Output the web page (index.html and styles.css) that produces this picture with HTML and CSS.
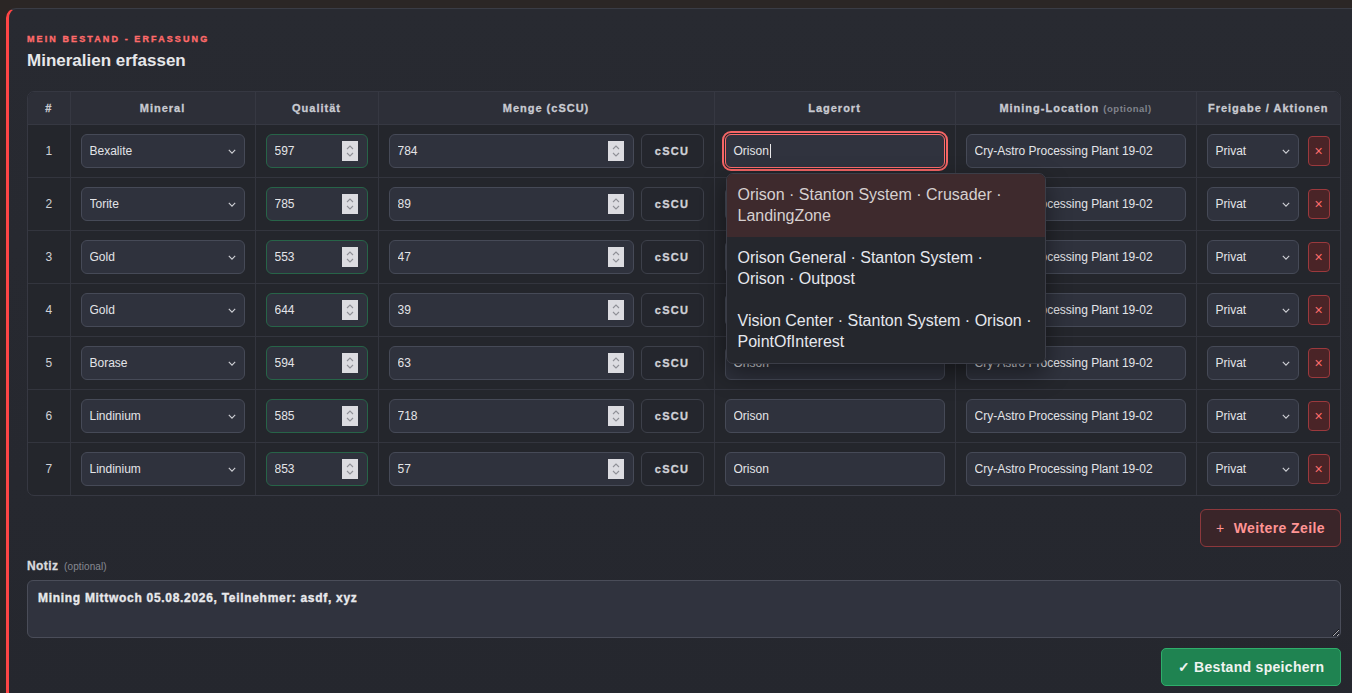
FILE: index.html
```html
<!DOCTYPE html>
<html lang="de">
<head>
<meta charset="utf-8">
<title>Mineralien erfassen</title>
<link rel="stylesheet" href="styles.css">
</head>
<body>
<div class="page">
  <section class="card">
    <div class="eyebrow">MEIN BESTAND - ERFASSUNG</div>
    <h2 class="title">Mineralien erfassen</h2>

    <div class="table-wrap">
      <table class="grid">
        <colgroup>
          <col class="c-num"><col class="c-min"><col class="c-q"><col class="c-amt"><col class="c-loc"><col class="c-mine"><col class="c-act">
        </colgroup>
        <thead>
          <tr>
            <th>#</th>
            <th>Mineral</th>
            <th>Qualität</th>
            <th>Menge (cSCU)</th>
            <th>Lagerort</th>
            <th>Mining-Location <span class="opt">(optional)</span></th>
            <th>Freigabe / Aktionen</th>
          </tr>
        </thead>
        <tbody>
          <tr>
            <td class="n">1</td>
            <td><div class="select"><select><option>Bexalite</option></select><svg class="chev" viewBox="0 0 10 6"><path d="M1 1l4 4 4-4"/></svg></div></td>
            <td><div class="num q"><input value="597"><span class="spin"><svg viewBox="0 0 10 16"><path d="M2 6l3-3 3 3M2 10l3 3 3-3"/></svg></span></div></td>
            <td><div class="amount"><div class="num"><input value="784"><span class="spin"><svg viewBox="0 0 10 16"><path d="M2 6l3-3 3 3M2 10l3 3 3-3"/></svg></span></div><button class="unit">cSCU</button></div></td>
            <td class="loc">
              <div class="text focus"><span>Orison</span><span class="caret"></span></div>
              <ul class="suggest">
                <li class="active">Orison · Stanton System · Crusader · LandingZone</li>
                <li>Orison General · Stanton System · Orison · Outpost</li>
                <li>Vision Center · Stanton System · Orison · PointOfInterest</li>
              </ul>
            </td>
            <td><input class="text" value="Cry-Astro Processing Plant 19-02"></td>
            <td><div class="acts"><div class="select vis"><select><option>Privat</option></select><svg class="chev" viewBox="0 0 10 6"><path d="M1 1l4 4 4-4"/></svg></div><button class="del">×</button></div></td>
          </tr>
          <tr>
            <td class="n">2</td>
            <td><div class="select"><select><option>Torite</option></select><svg class="chev" viewBox="0 0 10 6"><path d="M1 1l4 4 4-4"/></svg></div></td>
            <td><div class="num q"><input value="785"><span class="spin"><svg viewBox="0 0 10 16"><path d="M2 6l3-3 3 3M2 10l3 3 3-3"/></svg></span></div></td>
            <td><div class="amount"><div class="num"><input value="89"><span class="spin"><svg viewBox="0 0 10 16"><path d="M2 6l3-3 3 3M2 10l3 3 3-3"/></svg></span></div><button class="unit">cSCU</button></div></td>
            <td><input class="text" value="Orison"></td>
            <td><input class="text" value="Cry-Astro Processing Plant 19-02"></td>
            <td><div class="acts"><div class="select vis"><select><option>Privat</option></select><svg class="chev" viewBox="0 0 10 6"><path d="M1 1l4 4 4-4"/></svg></div><button class="del">×</button></div></td>
          </tr>
          <tr>
            <td class="n">3</td>
            <td><div class="select"><select><option>Gold</option></select><svg class="chev" viewBox="0 0 10 6"><path d="M1 1l4 4 4-4"/></svg></div></td>
            <td><div class="num q"><input value="553"><span class="spin"><svg viewBox="0 0 10 16"><path d="M2 6l3-3 3 3M2 10l3 3 3-3"/></svg></span></div></td>
            <td><div class="amount"><div class="num"><input value="47"><span class="spin"><svg viewBox="0 0 10 16"><path d="M2 6l3-3 3 3M2 10l3 3 3-3"/></svg></span></div><button class="unit">cSCU</button></div></td>
            <td><input class="text" value="Orison"></td>
            <td><input class="text" value="Cry-Astro Processing Plant 19-02"></td>
            <td><div class="acts"><div class="select vis"><select><option>Privat</option></select><svg class="chev" viewBox="0 0 10 6"><path d="M1 1l4 4 4-4"/></svg></div><button class="del">×</button></div></td>
          </tr>
          <tr>
            <td class="n">4</td>
            <td><div class="select"><select><option>Gold</option></select><svg class="chev" viewBox="0 0 10 6"><path d="M1 1l4 4 4-4"/></svg></div></td>
            <td><div class="num q"><input value="644"><span class="spin"><svg viewBox="0 0 10 16"><path d="M2 6l3-3 3 3M2 10l3 3 3-3"/></svg></span></div></td>
            <td><div class="amount"><div class="num"><input value="39"><span class="spin"><svg viewBox="0 0 10 16"><path d="M2 6l3-3 3 3M2 10l3 3 3-3"/></svg></span></div><button class="unit">cSCU</button></div></td>
            <td><input class="text" value="Orison"></td>
            <td><input class="text" value="Cry-Astro Processing Plant 19-02"></td>
            <td><div class="acts"><div class="select vis"><select><option>Privat</option></select><svg class="chev" viewBox="0 0 10 6"><path d="M1 1l4 4 4-4"/></svg></div><button class="del">×</button></div></td>
          </tr>
          <tr>
            <td class="n">5</td>
            <td><div class="select"><select><option>Borase</option></select><svg class="chev" viewBox="0 0 10 6"><path d="M1 1l4 4 4-4"/></svg></div></td>
            <td><div class="num q"><input value="594"><span class="spin"><svg viewBox="0 0 10 16"><path d="M2 6l3-3 3 3M2 10l3 3 3-3"/></svg></span></div></td>
            <td><div class="amount"><div class="num"><input value="63"><span class="spin"><svg viewBox="0 0 10 16"><path d="M2 6l3-3 3 3M2 10l3 3 3-3"/></svg></span></div><button class="unit">cSCU</button></div></td>
            <td><input class="text" value="Orison"></td>
            <td><input class="text" value="Cry-Astro Processing Plant 19-02"></td>
            <td><div class="acts"><div class="select vis"><select><option>Privat</option></select><svg class="chev" viewBox="0 0 10 6"><path d="M1 1l4 4 4-4"/></svg></div><button class="del">×</button></div></td>
          </tr>
          <tr>
            <td class="n">6</td>
            <td><div class="select"><select><option>Lindinium</option></select><svg class="chev" viewBox="0 0 10 6"><path d="M1 1l4 4 4-4"/></svg></div></td>
            <td><div class="num q"><input value="585"><span class="spin"><svg viewBox="0 0 10 16"><path d="M2 6l3-3 3 3M2 10l3 3 3-3"/></svg></span></div></td>
            <td><div class="amount"><div class="num"><input value="718"><span class="spin"><svg viewBox="0 0 10 16"><path d="M2 6l3-3 3 3M2 10l3 3 3-3"/></svg></span></div><button class="unit">cSCU</button></div></td>
            <td><input class="text" value="Orison"></td>
            <td><input class="text" value="Cry-Astro Processing Plant 19-02"></td>
            <td><div class="acts"><div class="select vis"><select><option>Privat</option></select><svg class="chev" viewBox="0 0 10 6"><path d="M1 1l4 4 4-4"/></svg></div><button class="del">×</button></div></td>
          </tr>
          <tr>
            <td class="n">7</td>
            <td><div class="select"><select><option>Lindinium</option></select><svg class="chev" viewBox="0 0 10 6"><path d="M1 1l4 4 4-4"/></svg></div></td>
            <td><div class="num q"><input value="853"><span class="spin"><svg viewBox="0 0 10 16"><path d="M2 6l3-3 3 3M2 10l3 3 3-3"/></svg></span></div></td>
            <td><div class="amount"><div class="num"><input value="57"><span class="spin"><svg viewBox="0 0 10 16"><path d="M2 6l3-3 3 3M2 10l3 3 3-3"/></svg></span></div><button class="unit">cSCU</button></div></td>
            <td><input class="text" value="Orison"></td>
            <td><input class="text" value="Cry-Astro Processing Plant 19-02"></td>
            <td><div class="acts"><div class="select vis"><select><option>Privat</option></select><svg class="chev" viewBox="0 0 10 6"><path d="M1 1l4 4 4-4"/></svg></div><button class="del">×</button></div></td>
          </tr>
        </tbody>
      </table>
    </div>

    <div class="add-row"><button class="btn-add"><span class="plus">+</span>Weitere Zeile</button></div>

    <label class="note-label">Notiz <span class="opt">(optional)</span></label>
    <textarea class="note">Mining Mittwoch 05.08.2026, Teilnehmer: asdf, xyz</textarea>

    <div class="save-row"><button class="btn-save">✓ Bestand speichern</button></div>
  </section>
</div>
</body>
</html>
```

FILE: styles.css
```css
* { box-sizing: border-box; }

html, body {
  margin: 0;
  padding: 0;
  background: #2b2625;
  height: 100%;
  overflow: hidden;
  font-family: "Liberation Sans", Arial, sans-serif;
  color: #e3e4e8;
}

.page {
  padding: 8px 0 0 6px;
}

.card {
  background: linear-gradient(180deg, #282a31 0%, #25272e 100%);
  border-left: 3px solid #ff4545;
  border-top: 1px solid #3a3c45;
  border-top-left-radius: 10px;
  padding: 25px 11px 30px 18px;
  min-height: 700px;
}

.eyebrow {
  font-size: 9px;
  line-height: 10px;
  font-weight: 700;
  letter-spacing: 2.1px;
  color: #ff6a6a;
  -webkit-text-stroke: 0.35px #ff6a6a;
}

.title {
  margin: 7px 0 0;
  font-size: 17px;
  line-height: 20px;
  font-weight: 700;
  color: #e6e7ea;
}

.table-wrap {
  margin-top: 20px;
  border: 1px solid #363842;
  border-radius: 7px;
  overflow: hidden;
  background: #24262c;
}

.grid {
  width: 100%;
  table-layout: fixed;
  border-collapse: collapse;
}

.c-num { width: 42px; }
.c-min { width: 185px; }
.c-q { width: 123px; }
.c-amt { width: 336px; }
.c-loc { width: 241px; }
.c-mine { width: 241px; }
.c-act { width: 144px; }

.grid th {
  height: 32px;
  padding: 0;
  background: #2d2f38;
  font-size: 11px;
  font-weight: 700;
  letter-spacing: 1px;
  color: #c8cad1;
  -webkit-text-stroke: 0.3px #c8cad1;
  text-align: center;
  border-right: 1px solid #363842;
  border-bottom: 1px solid #363842;
  white-space: nowrap;
}

.grid th .opt {
  font-size: 9.5px;
  letter-spacing: 0.5px;
  color: #80838c;
  -webkit-text-stroke: 0;
}

.grid td {
  height: 53px;
  padding: 0 10px;
  border-right: 1px solid #33353e;
  border-bottom: 1px solid #33353e;
  vertical-align: middle;
}

.grid th:last-child, .grid td:last-child { border-right: none; }
.grid tbody tr:last-child td { border-bottom: none; }

.grid td.n {
  text-align: center;
  font-size: 12px;
  color: #cfd1d6;
  padding: 0;
}

select, input, textarea, button {
  font-family: "Liberation Sans", Arial, sans-serif;
}

.select {
  position: relative;
  display: flex;
}

.select select {
  appearance: none;
  -webkit-appearance: none;
  width: 100%;
  height: 34px;
  padding: 0 24px 0 8px;
  background: #2f323d;
  border: 1px solid #464a57;
  border-radius: 6px;
  color: #e3e4e8;
  font-size: 12px;
  outline: none;
}

.select .chev {
  position: absolute;
  right: 9px;
  top: 15px;
  width: 8px;
  height: 5px;
  fill: none;
  stroke: #cfd0d5;
  stroke-width: 1.4;
  pointer-events: none;
}

.num {
  display: flex;
  align-items: center;
  height: 34px;
  padding: 0 9px 0 8px;
  background: #2f323d;
  border: 1px solid #464a57;
  border-radius: 6px;
}

.num.q { border-color: #276448; }

.num input {
  flex: 1;
  min-width: 0;
  border: none;
  background: transparent;
  color: #e3e4e8;
  font-size: 12px;
  padding: 0;
  outline: none;
}

.spin {
  width: 16px;
  height: 20px;
  background: #dcdce1;
  display: flex;
  align-items: center;
  justify-content: center;
}

.spin svg {
  width: 10px;
  height: 16px;
  fill: none;
  stroke: #8f9097;
  stroke-width: 1.1;
}

.amount {
  display: flex;
  gap: 7px;
}

.amount .num { flex: 1; }

.unit {
  width: 63px;
  height: 34px;
  flex: none;
  background: #24262d;
  border: 1px solid #3d404a;
  border-radius: 6px;
  color: #cfd1d7;
  font-size: 11px;
  font-weight: 700;
  letter-spacing: 1.3px;
  -webkit-text-stroke: 0.3px #cfd1d7;
  padding: 0;
}

.text {
  display: block;
  width: 100%;
  height: 34px;
  padding: 0 8px;
  background: #2f323d;
  border: 1px solid #464a57;
  border-radius: 6px;
  color: #e3e4e8;
  font-size: 12px;
  outline: none;
}

div.text {
  display: flex;
  align-items: center;
}

.text.focus {
  border-color: #ff6b6b;
  outline: 2px solid #f46565;
  outline-offset: 1px;
  background: #30333e;
}

.caret {
  width: 1px;
  height: 14px;
  margin-left: 1px;
  background: #e8e8ea;
}

.loc { position: relative; }

.suggest {
  position: absolute;
  top: 48px;
  left: 11px;
  width: 320px;
  margin: 0;
  padding: 0;
  list-style: none;
  background: #25272d;
  border: 1px solid #3b3d47;
  border-radius: 7px;
  overflow: hidden;
  box-shadow: 0 10px 24px rgba(0, 0, 0, 0.45);
  z-index: 10;
}

.suggest li {
  padding: 10px 12px 10px 11px;
  font-size: 16px;
  line-height: 21.5px;
  color: #e6e8ee;
}

.suggest li.active {
  background: #3e2a2d;
  color: #d6d0d0;
}

.acts {
  display: flex;
  align-items: center;
  gap: 9px;
}

.select.vis { width: 92px; flex: none; }

.del {
  width: 22px;
  height: 30px;
  flex: none;
  padding: 0;
  background: #4a2427;
  border: 1px solid #9b393d;
  border-radius: 4px;
  color: #ff6b6b;
  font-size: 14px;
  line-height: 1;
}

.add-row {
  display: flex;
  justify-content: flex-end;
  margin-top: 13px;
}

.btn-add {
  width: 141px;
  height: 38px;
  background: #3a2529;
  border: 1px solid #8d383c;
  border-radius: 6px;
  color: #ff9494;
  font-size: 14px;
  font-weight: 700;
  letter-spacing: 0.4px;
  padding: 0;
}

.btn-add .plus {
  font-weight: 400;
  margin-right: 9px;
}

.note-label {
  display: block;
  margin-top: 12px;
  font-size: 12px;
  line-height: 14px;
  font-weight: 700;
  letter-spacing: 0.4px;
  color: #d9dade;
  -webkit-text-stroke: 0.3px #d9dade;
}

.note-label .opt {
  font-size: 10px;
  font-weight: 400;
  letter-spacing: 0.1px;
  color: #868992;
  margin-left: 2px;
  -webkit-text-stroke: 0;
}

.note {
  display: block;
  width: 100%;
  height: 58px;
  margin-top: 6px;
  padding: 10px 10px;
  background: #30333e;
  border: 1px solid #4a4d59;
  border-radius: 6px;
  color: #e8e9ec;
  font-size: 12px;
  font-weight: 700;
  letter-spacing: 0.7px;
  -webkit-text-stroke: 0.35px #e8e9ec;
  resize: vertical;
  outline: none;
}

.save-row {
  display: flex;
  justify-content: flex-end;
  margin-top: 10px;
}

.btn-save {
  width: 180px;
  height: 38px;
  background: #1f8351;
  border: 1px solid #2fae6b;
  border-radius: 5px;
  color: #eff3f0;
  font-size: 14px;
  font-weight: 700;
  letter-spacing: 0.3px;
  padding: 0;
}
```
